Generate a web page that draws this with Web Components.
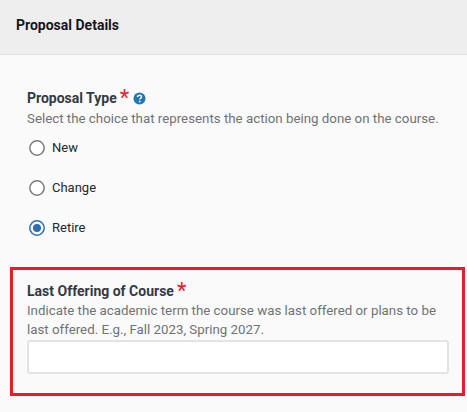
<!DOCTYPE html>
<html>
<head>
<meta charset="utf-8">
<style>
  html, body { margin: 0; height: 100%; }
  body { background: #fafafa; font-family: Roboto, sans-serif; overflow: hidden; }
</style>
</head>
<body>
<proposal-details heading="Proposal Details">
  <choice-field label="Proposal Type" help>
    <span slot="hint">Select the choice that represents the action being done on the course.</span>
    <radio-option>New</radio-option>
    <radio-option>Change</radio-option>
    <radio-option checked>Retire</radio-option>
  </choice-field>
  <text-field label="Last Offering of Course">
    <span slot="hint">Indicate the academic term the course was last offered or plans to be last offered. E.g., Fall 2023, Spring 2027.</span>
  </text-field>
</proposal-details>

<script>
'use strict';
(function () {

  const labelCss = `
    .label { display: flex; align-items: flex-start; font-size: 14px; font-weight: 700; line-height: 20px; color: #333a45; }
    .star { color: #e3212d; font-size: 22px; font-weight: 400; line-height: 20px; margin-left: 3px; height: 20px; }
    .hint { font-size: 13.3px; line-height: 19.5px; margin-top: 1px; color: #6f7276; }
  `;

  class ProposalDetails extends HTMLElement {
    constructor() {
      super();
      const shadow = this.attachShadow({ mode: 'open' });
      shadow.innerHTML = `
        <style>
          :host { display: block; }
          header {
            height: 55px;
            box-sizing: border-box;
            padding: 0 16px 5px;
            display: flex;
            align-items: center;
            background: #eeeeee;
            border-bottom: 1px solid #e2e2e2;
            font-size: 14px;
            font-weight: 700;
            color: #14171c;
          }
          .body { padding: 33px 2px 0 10px; }
        </style>
        <header>${this.getAttribute('heading')}</header>
        <div class="body"><slot></slot></div>
      `;
    }
  }

  class ChoiceField extends HTMLElement {
    constructor() {
      super();
      const shadow = this.attachShadow({ mode: 'open' });
      const help = this.hasAttribute('help') ? `
        <svg class="help" width="13" height="13" viewBox="0 0 13 13">
          <circle cx="6.5" cy="6.5" r="6" fill="#1f76b9"/>
          <path d="M4.5 5.1c0-1.2.9-1.9 2-1.9s2 .7 2 1.7c0 1.5-1.8 1.4-1.8 2.7" fill="none" stroke="#fff" stroke-width="1.5"/>
          <rect x="5.9" y="8.7" width="1.6" height="1.6" fill="#fff"/>
        </svg>` : '';
      shadow.innerHTML = `
        <style>
          :host { display: block; padding: 0 17px; margin-bottom: 29px; }
          ${labelCss}
          .help { margin: 4px 0 0 4px; }
          .options { display: flex; flex-direction: column; gap: 20px; margin-top: 9px; }
        </style>
        <div class="label">${this.getAttribute('label')}<span class="star">*</span>${help}</div>
        <div class="hint"><slot name="hint"></slot></div>
        <div class="options"><slot></slot></div>
      `;
    }
  }

  class RadioOption extends HTMLElement {
    constructor() {
      super();
      const shadow = this.attachShadow({ mode: 'open' });
      const dot = this.hasAttribute('checked') ? '<circle cx="8" cy="8" r="4" fill="#2f6db5"/>' : '';
      const ring = this.hasAttribute('checked') ? '#2f6db5' : '#7b7b7b';
      shadow.innerHTML = `
        <style>
          :host { display: flex; align-items: center; gap: 7px; height: 20px; padding-left: 2px; font-size: 13px; color: #24282e; }
        </style>
        <svg width="16" height="16" viewBox="0 0 16 16">
          <circle cx="8" cy="8" r="7.2" fill="#fff" stroke="${ring}" stroke-width="1.5"/>${dot}
        </svg>
        <slot></slot>
      `;
    }
  }

  class TextField extends HTMLElement {
    constructor() {
      super();
      const shadow = this.attachShadow({ mode: 'open' });
      shadow.innerHTML = `
        <style>
          :host { display: block; border: 3px solid #ed1c24; padding: 11px 13px 19px 14px; }
          ${labelCss}
          .hint { margin-top: 0; }
          input {
            display: block;
            box-sizing: border-box;
            width: 100%;
            height: 34px;
            margin: 0;
            background: #fff;
            border: 2px solid #e3e3e3;
            border-radius: 3px;
            outline: none;
          }
        </style>
        <div class="label">${this.getAttribute('label')}<span class="star">*</span></div>
        <div class="hint"><slot name="hint"></slot></div>
        <input type="text">
      `;
    }
  }

  customElements.define('proposal-details', ProposalDetails);
  customElements.define('choice-field', ChoiceField);
  customElements.define('radio-option', RadioOption);
  customElements.define('text-field', TextField);
})();
</script>
</body>
</html>
